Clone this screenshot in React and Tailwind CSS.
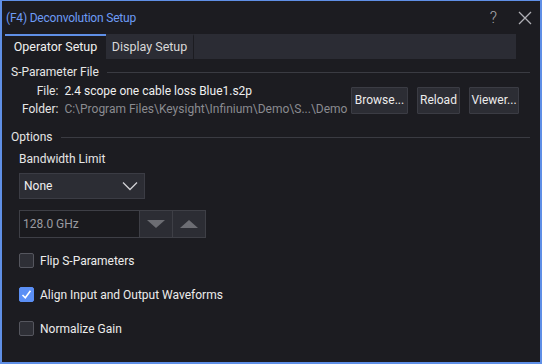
import React, { useState } from 'react';

const SectionHeader = ({ title }) => (
    <div className="flex items-center gap-2 h-[16px] pr-[2px]">
        <span className="text-[12px] text-[#e6e6e6] whitespace-nowrap">{title}</span>
        <div className="flex-1 h-px bg-[#3a3b42]" />
    </div>
);

const Checkbox = ({ checked, label, onChange }) => (
    <label className="flex items-center gap-[6px] h-[15px] cursor-pointer" onClick={onChange}>
        <span
            className={`w-[15px] h-[15px] rounded-[2px] border flex items-center justify-center ${checked ? 'bg-[#5b8ff5] border-[#5b8ff5]' : 'bg-[#2e2f36] border-[#55565e]'}`}
        >
            {checked && (
                <svg width="11" height="11" viewBox="0 0 11 11">
                    <path d="M1.5 6 L4.3 8.8 L9.5 1.8" fill="none" stroke="#fff" strokeWidth="1.6" />
                </svg>
            )}
        </span>
        <span className="text-[12px] text-[#ececec]">{label}</span>
    </label>
);

const DialogButton = ({ children, width }) => (
    <button className={`h-[27px] ${width} bg-[#2c2d34] border border-[#3b3c44] text-[12px] text-[#ececec] rounded-[1px]`}>
        {children}
    </button>
);

const App = () => {
    const [tab, setTab] = useState('operator');
    const [checks, setChecks] = useState({ flip: false, align: true, normalize: false });

    const toggle = (key) => setChecks(prev => ({ ...prev, [key]: !prev[key] }));

    return (
        <div
            className="w-[542px] h-[364px] bg-[#1c1c21] border-2 border-t-[1px] border-[#5f8fe6] flex flex-col overflow-hidden"
            style={{ fontFamily: 'Roboto, "Liberation Sans", sans-serif' }}
        >
            {/* Title bar */}
            <div className="h-[33px] shrink-0 flex items-center justify-between pl-[4px] pr-[8px] bg-[#1c1c21]">
                <span className="text-[12px] tracking-[-0.2px] text-[#6d9bf5]">(F4) Deconvolution Setup</span>
                <div className="flex items-center gap-[21px] text-[#a8a8ad]">
                    <span className="text-[16px] font-light">?</span>
                    <svg width="14" height="14" viewBox="0 0 14 14">
                        <path d="M1 1 L13 13 M13 1 L1 13" stroke="#b0b0b5" strokeWidth="1.3" />
                    </svg>
                </div>
            </div>

            {/* Tabs */}
            <div className="ml-[3px] mr-[24px] flex h-[25px] shrink-0 bg-[#2b2c34]">
                <button
                    onClick={() => setTab('operator')}
                    className={`w-[101px] text-[12.5px] border-t-2 ${tab === 'operator' ? 'bg-[#1c1c21] border-[#5f8fe6] text-[#f0f0f0]' : 'border-transparent text-[#d8d8d8]'}`}
                >
                    Operator Setup
                </button>
                <button
                    onClick={() => setTab('display')}
                    className={`w-[88px] text-[12.5px] border-t-2 border-r border-r-[#1c1c21] ${tab === 'display' ? 'bg-[#1c1c21] border-t-[#5f8fe6] text-[#f0f0f0]' : 'border-t-transparent text-[#d8d8d8]'}`}
                >
                    Display Setup
                </button>
                <div className="flex-1" />
            </div>

            {/* Content */}
            <div className="flex-1 pl-[9px] pr-[8px] pt-[5px]">
                <SectionHeader title="S-Parameter File" />
                <div className="flex items-center justify-between mt-[2px]">
                    <div className="grid grid-cols-[auto_1fr] gap-x-[6px] text-[12px] leading-[18px] pl-[11px] whitespace-nowrap">
                        <span className="text-right text-[#e6e6e6]">File:</span>
                        <span className="text-[#f0f0f0]">2.4 scope one cable loss Blue1.s2p</span>
                        <span className="text-right text-[#e6e6e6]">Folder:</span>
                        <span className="text-[#8a8b90]">C:\Program Files\Keysight\Infinium\Demo\S...\Demo</span>
                    </div>
                    <div className="flex gap-[9px] mr-[13px]">
                        <DialogButton width="w-[57px]">Browse...</DialogButton>
                        <DialogButton width="w-[43px]">Reload</DialogButton>
                        <DialogButton width="w-[50px]">Viewer...</DialogButton>
                    </div>
                </div>

                <div className="mt-[11px]">
                    <SectionHeader title="Options" />
                </div>

                <div className="pl-[8px]">
                    <div className="text-[12px] leading-[16px] text-[#e6e6e6] mt-[6px]">Bandwidth Limit</div>
                    <div className="mt-[6px] w-[126px] h-[26px] bg-[#2c2d34] border border-[#3b3c44] flex items-center justify-between pl-[4px] pr-[6px]">
                        <span className="text-[12px] text-[#f0f0f0]">None</span>
                        <svg width="16" height="10" viewBox="0 0 16 10">
                            <path d="M1 1.5 L8 8.5 L15 1.5" fill="none" stroke="#d0d0d4" strokeWidth="1.3" />
                        </svg>
                    </div>

                    <div className="mt-[11px] flex w-[187px] h-[28px] border border-[#3e3f46]">
                        <div className="flex-1 bg-[#1a1a1e] flex items-center pl-[3px] text-[12px] text-[#9a9ba0]">128.0 GHz</div>
                        <div className="w-[33px] bg-[#2c2d34] border-l border-[#3e3f46] flex items-center justify-center">
                            <svg width="18" height="8" viewBox="0 0 18 8"><path d="M0 0 H18 L9 8 Z" fill="#6c6d73" /></svg>
                        </div>
                        <div className="w-[33px] bg-[#2c2d34] border-l border-[#3e3f46] flex items-center justify-center">
                            <svg width="18" height="8" viewBox="0 0 18 8"><path d="M0 8 H18 L9 0 Z" fill="#6c6d73" /></svg>
                        </div>
                    </div>

                    <div className="mt-[15px] flex flex-col gap-[19px]">
                        <Checkbox checked={checks.flip} label="Flip S-Parameters" onChange={() => toggle('flip')} />
                        <Checkbox checked={checks.align} label="Align Input and Output Waveforms" onChange={() => toggle('align')} />
                        <Checkbox checked={checks.normalize} label="Normalize Gain" onChange={() => toggle('normalize')} />
                    </div>
                </div>
            </div>
        </div>
    );
};

export default App;
